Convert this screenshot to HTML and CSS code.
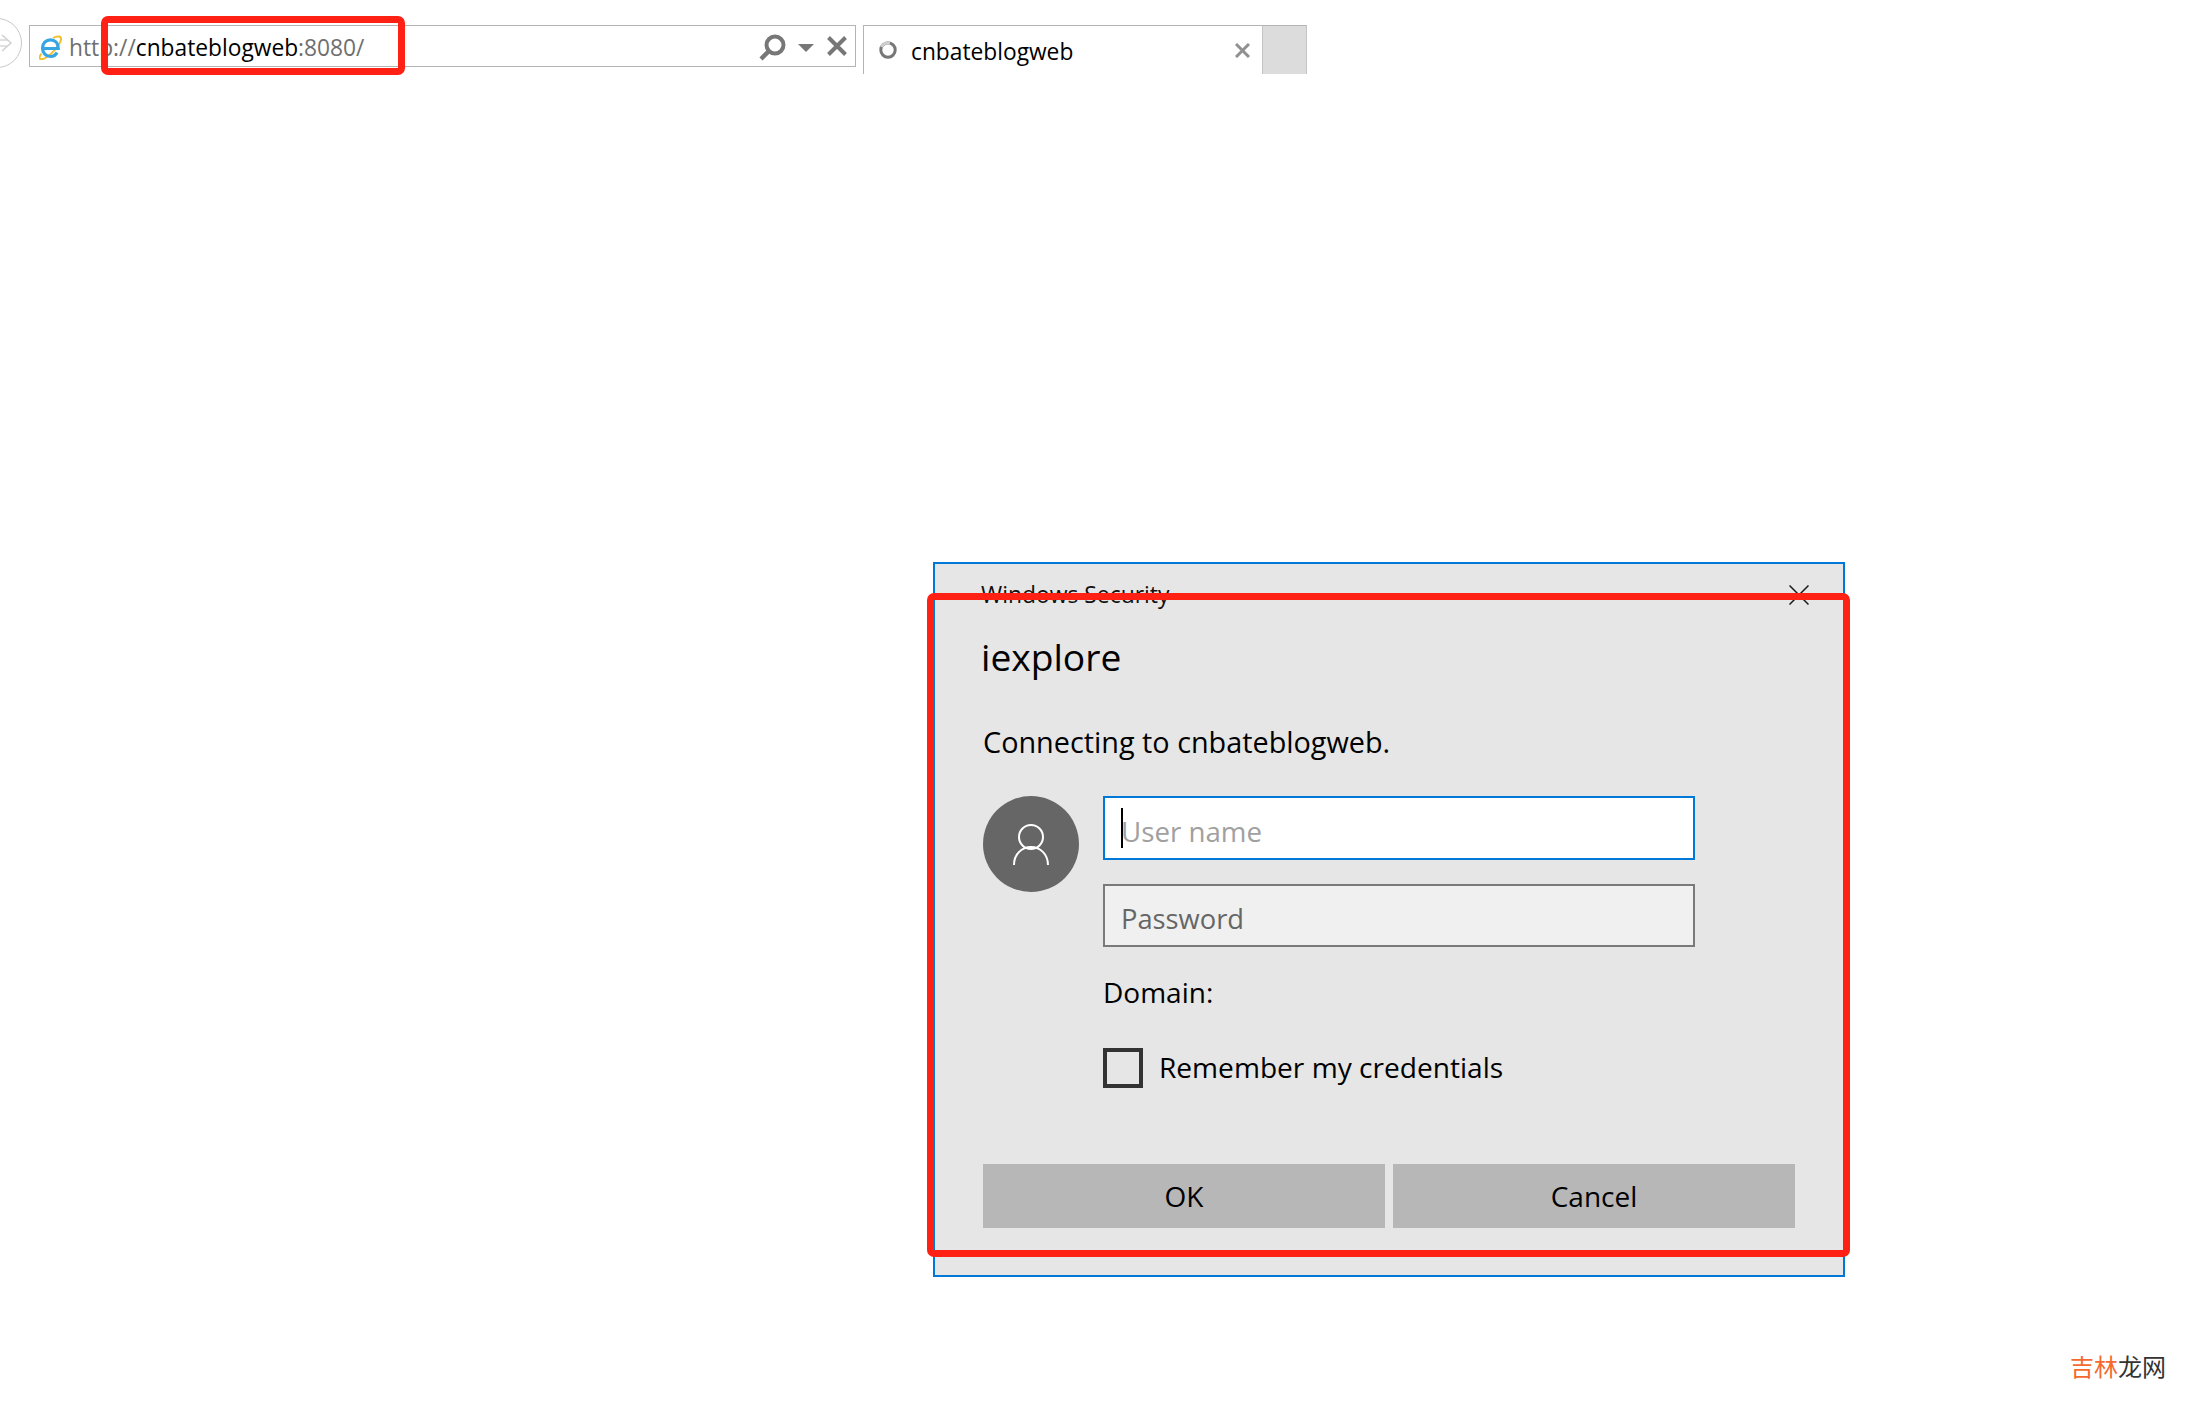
FILE: index.html
```html
<!DOCTYPE html>
<html lang="en">
<head>
<meta charset="utf-8">
<title>iexplore</title>
<link rel="stylesheet" href="styles.css">
</head>
<body>
<div class="page">
  <header class="toolbar">
    <div class="back">
      <svg viewBox="0 0 50 50" width="50" height="50"><circle cx="25" cy="25" r="24.500" fill="#fff" stroke="#c8c8c8" stroke-width="1"/><path d="M30 17l9 8-9 8" fill="none" stroke="#d0d0d0" stroke-width="1.500"/><path d="M28 22h7M28 28h7" stroke="#d8d8d8" stroke-width="1.500"/></svg>
    </div>
    <div class="address">
      <svg class="ie" viewBox="0 0 23 25" width="23" height="25"><path d="M2.500 18.500C-1.500 24 1.500 26 7 22.500C13.500 18.500 21 10 22 4.500C22.500 1 18.500 0.500 14 3" fill="none" stroke="#f0c02c" stroke-width="2"/><path d="M18 17.500C16.500 20.500 14 21.500 11.500 21.500C7 21.500 3.500 18 3.500 13C3.500 8 7 4.800 11.500 4.800C16 4.800 19.300 8 19.300 13.500H5" fill="none" stroke="#35a5e4" stroke-width="3.200"/></svg>
      <span class="url"><span class="url-dim">http://</span>cnbateblogweb<span class="url-dim">:8080/</span></span>
      <span class="address-tools">
        <svg class="tool-search" viewBox="0 0 28 28" width="28" height="28"><circle cx="16" cy="11" r="8.500" fill="none" stroke="#777" stroke-width="4"/><path d="M10.500 16.500L2 25" stroke="#777" stroke-width="4.500"/></svg>
        <svg class="tool-arrow" viewBox="0 0 16 8" width="16" height="8"><path d="M0 0h16L8 8z" fill="#777"/></svg>
        <svg class="tool-close" viewBox="0 0 20 20" width="20" height="20"><path d="M1.500 1.500l17 17M18.500 1.500l-17 17" stroke="#777" stroke-width="4"/></svg>
      </span>
    </div>
    <div class="tab-strip">
      <div class="tab">
        <svg class="spinner" viewBox="0 0 18 18" width="18" height="18"><circle cx="9" cy="9" r="7.200" fill="none" stroke="#777" stroke-width="3"/><path d="M2.500 6A7.200 7.200 0 0 1 11 2" fill="none" stroke="#cfcfcf" stroke-width="3"/></svg>
        <span class="tab-title">cnbateblogweb</span>
        <svg class="tab-close" viewBox="0 0 15 15" width="15" height="15"><path d="M1 1l13 13M14 1L1 14" stroke="#909090" stroke-width="3"/></svg>
      </div>
      <div class="new-tab"></div>
    </div>
  </header>

  <main class="dialog">
    <div class="titlebar">
      <span class="window-title">Windows Security</span>
      <svg class="dialog-close" viewBox="0 0 20 20" width="20" height="20"><path d="M0.500 0.500l19 19M19.500 0.500l-19 19" stroke="#1a1a1a" stroke-width="1.500"/></svg>
    </div>
    <h1 class="app-name">iexplore</h1>
    <p class="connecting">Connecting to cnbateblogweb.</p>
    <div class="credentials">
      <div class="avatar">
        <svg viewBox="0 0 96 96" width="96" height="96"><circle cx="48" cy="41" r="12" fill="none" stroke="#fff" stroke-width="2"/><path d="M31 69C31 58 39 51 48 51C57 51 65 58 65 69" fill="none" stroke="#fff" stroke-width="2"/></svg>
      </div>
      <div class="fields">
        <div class="field field-active"><span class="caret"></span><span class="hint">User name</span></div>
        <div class="field field-idle"><span class="hint-dark">Password</span></div>
        <div class="domain">Domain:</div>
        <div class="remember"><span class="checkbox"></span><span class="remember-label">Remember my credentials</span></div>
      </div>
    </div>
    <div class="buttons">
      <div class="button">OK</div>
      <div class="button">Cancel</div>
    </div>
  </main>

  <div class="mark mark-url"></div>
  <div class="mark mark-dialog"></div>
  <div class="watermark"><span class="wm-orange">吉林</span>龙网</div>
</div>
</body>
</html>
```
FILE: styles.css
```css
html, body {
  margin: 0;
  padding: 0;
  background: #fff;
}
.page {
  position: relative;
  width: 2206px;
  height: 1403px;
  overflow: hidden;
  font-family: "Open Sans", "Noto Sans", sans-serif;
  color: #000;
}
.toolbar {
  display: flex;
  align-items: flex-start;
  height: 74px;
  padding-top: 25px;
  box-sizing: border-box;
}
.back {
  width: 50px;
  height: 50px;
  margin: -7px 7px 0 -28px;
  flex: none;
}
.back svg { display: block; }
.address {
  width: 827px;
  height: 42px;
  box-sizing: border-box;
  border: 1.5px solid #b4b4b4;
  display: flex;
  align-items: center;
  padding: 0 8.5px 0 9px;
  flex: none;
}
.ie {
  flex: none;
  margin-top: 3px;
}
.url {
  margin-left: 7px;
  padding-top: 4px;
  font-size: 22.75px;
  color: #000;
  white-space: nowrap;
  line-height: 38px;
}
.url-dim { color: #6f6f6f; }
.address-tools {
  margin-left: auto;
  display: flex;
  align-items: center;
}
.tool-search { margin-top: 3px; }
.tool-arrow {
  margin: 3px 0 0 11px;
}
.tool-close { margin-left: 13px; }
.tab-strip {
  display: flex;
  margin-left: 7px;
  height: 49px;
  flex: none;
}
.tab {
  width: 399px;
  box-sizing: border-box;
  border-top: 1.5px solid #b4b4b4;
  border-left: 1.5px solid #b4b4b4;
  display: flex;
  align-items: center;
  padding: 0 12px 0 15px;
}
.tab-title {
  margin-left: 14px;
  padding-top: 2px;
  font-size: 22.75px;
  white-space: nowrap;
}
.tab-close { margin-left: auto; }
.new-tab {
  width: 45px;
  background: #dcdcdc;
  box-sizing: border-box;
  border-top: 1.5px solid #b4b4b4;
  border-left: 1.5px solid #c4c4c4;
  border-right: 1.5px solid #c4c4c4;
}
.dialog {
  width: 912px;
  height: 715px;
  margin: 488px 0 0 933px;
  box-sizing: border-box;
  border: 2px solid #0078d7;
  background: #e6e6e6;
  padding: 0 48px;
}
.titlebar {
  display: flex;
  justify-content: space-between;
  align-items: center;
  height: 60px;
  margin: 0 -14px 0 -2px;
}
.window-title {
  font-size: 22.9px;
  line-height: 60px;
  margin-top: 2px;
  color: #111;
}
.dialog-close { margin-top: 2px; }
.app-name {
  margin: 8px 0 0 -2px;
  font-size: 37.2px;
  font-weight: 400;
  line-height: 50px;
}
.connecting {
  margin: 40px 0 0;
  font-size: 28.8px;
  line-height: 40px;
}
.credentials {
  display: flex;
  gap: 24px;
  margin-top: 34px;
}
.avatar {
  width: 96px;
  height: 96px;
  border-radius: 50%;
  background: #666;
  flex: none;
}
.avatar svg { display: block; }
.fields {
  width: 592px;
  display: flex;
  flex-direction: column;
}
.field {
  box-sizing: border-box;
  height: 64px;
  border: 2px solid;
  display: flex;
  align-items: center;
  padding: 6px 0 0 16px;
  font-size: 27.7px;
}
.field-active {
  border-color: #0078d7;
  background: #fff;
}
.field-idle {
  margin-top: 24px;
  height: 63px;
  border-color: #7a7a7a;
  background: #f0f0f0;
  font-size: 27.3px;
}
.caret {
  width: 2px;
  height: 40px;
  background: #000;
  margin: -6px -2px 0 0;
  flex: none;
}
.hint { color: #a0a0a0; }
.hint-dark { color: #666; }
.domain {
  margin-top: 25px;
  font-size: 28px;
  line-height: 40px;
}
.remember {
  display: flex;
  align-items: center;
  gap: 16px;
  margin-top: 36px;
}
.checkbox {
  box-sizing: border-box;
  width: 40px;
  height: 40px;
  border: 4px solid #333;
  flex: none;
}
.remember-label {
  font-size: 28.1px;
  line-height: 40px;
  margin-top: -2px;
}
.buttons {
  display: grid;
  grid-template-columns: 1fr 1fr;
  gap: 8px;
  margin-top: 76px;
}
.button {
  height: 64px;
  background: #b7b7b7;
  display: flex;
  align-items: center;
  justify-content: center;
  font-size: 28px;
}
.mark {
  position: absolute;
  box-sizing: border-box;
  border: 7px solid #ff2114;
  border-radius: 7px;
}
.mark-url {
  left: 101px;
  top: 16px;
  width: 304px;
  height: 59px;
}
.mark-dialog {
  left: 927px;
  top: 593px;
  width: 923px;
  height: 664px;
}
.watermark {
  position: absolute;
  left: 2070px;
  top: 1350px;
  font-family: "Noto Sans CJK SC", sans-serif;
  font-size: 24px;
  line-height: 32px;
  color: #333;
  white-space: nowrap;
}
.wm-orange { color: #f5692e; }
```
